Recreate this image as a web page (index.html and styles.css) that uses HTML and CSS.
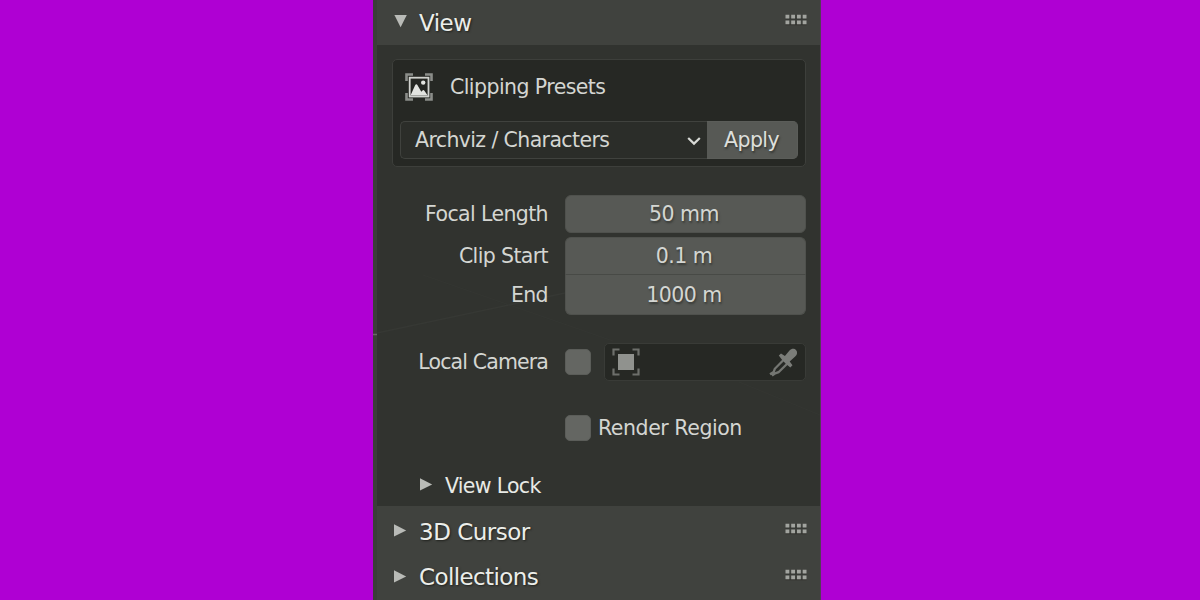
FILE: index.html
```html
<!DOCTYPE html>
<html lang="en">
<head>
<meta charset="utf-8">
<title>View panel</title>
<link rel="stylesheet" href="styles.css">
</head>
<body>
<svg class="defs" width="0" height="0" aria-hidden="true">
  <symbol id="grip" viewBox="0 0 22 12">
    <path class="grip-shadow" d="M.5 4.500h21v1H.5zM.5 10.200h21v1H.5z"/>
    <path class="grip-dots" d="M.5.7h3.8v3.8H.5zM6.2.7H10v3.8H6.2zM12 .7h3.8v3.8H12zM17.7.7h3.8v3.8h-3.8zM.5 6.4h3.8v3.8H.5zM6.2 6.4H10v3.8H6.2zM12 6.4h3.8v3.8H12zM17.7 6.4h3.8v3.8h-3.8z"/>
  </symbol>
  <symbol id="tri" viewBox="0 0 13 13"><path d="M0 .2V12.600L12.200 6.400z"/></symbol>
</svg>
<main class="sidebar">
  <svg class="lines" width="448" height="600" aria-hidden="true">
    <path d="M4 333L192 293" stroke="#363834" stroke-width="1.500"/>
    <path d="M50 275L240 341M366 382L447 415" stroke="#343632"/>
    <path d="M0 334.500H4" stroke="#686a66" stroke-width="1.500"/>
  </svg>
  <div class="edge"></div>
  <div class="panels">
    <header class="head head-view">
      <svg class="tri down"><use href="#tri"/></svg>
      <h1 class="title">View</h1>
      <svg class="grip"><use href="#grip"/></svg>
    </header>
    <section class="content">
      <div class="presets">
        <div class="presets-head">
          <svg class="preset-icon" width="28" height="28" viewBox="0 0 28 28">
            <path d="M1.500 8V1.500H8M20 1.500h6.500V8M26.500 20v6.500H20M8 26.500H1.500V20" fill="none" stroke="#8b8d89" stroke-width="2.600"/>
            <rect x="4.700" y="4.700" width="18.800" height="18.800" fill="#242622" stroke="#d0d2ce" stroke-width="1.800"/>
            <path d="M5.500 22.600L10 12.500q1.300-2.600 2.700 0l3.600 6.300 1.200-1.400q1-.8 1.900.4l3.300 4.800z" fill="#e2e4e0"/>
            <circle cx="18.200" cy="9.600" r="2.200" fill="#e2e4e0"/>
          </svg>
          <span class="t-clip">Clipping Presets</span>
        </div>
        <div class="presets-row">
          <div class="select">
            <span class="t-arch">Archviz / Characters</span>
            <svg class="chevron" width="14" height="10" viewBox="0 0 14 10"><path d="M1.200 2L7 7.600 12.800 2" fill="none" stroke="#d8dad6" stroke-width="2.200"/></svg>
          </div>
          <button class="apply">Apply</button>
        </div>
      </div>
      <div class="row focal"><label class="label">Focal Length</label><div class="num">50 mm</div></div>
      <div class="row clip-start"><label class="label">Clip Start</label><div class="num top">0.1 m</div></div>
      <div class="row clip-end"><label class="label">End</label><div class="num bottom">1000 m</div></div>
      <div class="row camera">
        <label class="label t-camera">Local Camera</label>
        <span class="check"></span>
        <div class="object">
          <svg width="28" height="28" viewBox="0 0 28 28">
            <path d="M1.500 7.500v-6h6M20.500 1.500h6v6M26.500 20.500v6h-6M7.500 26.500h-6v-6" fill="none" stroke="#6d6f6b" stroke-width="2.200"/>
            <rect x="6" y="6" width="16" height="16" fill="#90928e"/>
          </svg>
          <svg width="29" height="29" viewBox="0 0 29 29">
            <path d="M15.500 11L5.800 20.800 4.600 24.100 1 26.200M19.200 14.700L9.500 24.200 6.200 25.300 3 27.700" fill="none" stroke="#747672" stroke-width="2.300"/>
            <path d="M9.800 7.500l2.200-2.100 3.900 2.700 4.600-5.700c2-2.300 5-2.200 6.500-.5 1.700 1.800 1.500 4.600-.8 6.500l-5.500 5.100 2.800 3.700-2.200 2.200-4.800-3.900-3.500-3.700z" fill="#7b7d79"/>
          </svg>
        </div>
      </div>
      <div class="row region">
        <span class="label"></span><span class="check"></span><span class="t-region">Render Region</span>
      </div>
      <div class="sub"><svg class="tri"><use href="#tri"/></svg><span class="t-lock">View Lock</span></div>
    </section>
    <header class="head head-cursor">
      <svg class="tri"><use href="#tri"/></svg><h2 class="title t-cursor">3D Cursor</h2><svg class="grip"><use href="#grip"/></svg>
    </header>
    <header class="head head-coll">
      <svg class="tri"><use href="#tri"/></svg><h2 class="title t-coll">Collections</h2><svg class="grip"><use href="#grip"/></svg>
    </header>
  </div>
</main>
</body>
</html>
```
FILE: styles.css
```css
* { box-sizing: border-box; }
body {
  margin: 0;
  height: 600px;
  overflow: hidden;
  background: #af00d3;
  font: 20.5px/24px "DejaVu Sans", sans-serif;
  letter-spacing: -0.5px;
  color: #d4d6d2;
}
svg { display: block; flex: none; }
.defs { position: absolute; }
.sidebar {
  position: relative;
  display: flex;
  width: 448px;
  height: 600px;
  margin-left: 373px;
  background: #31332f;
  border-right: 1px solid #543c58;
}
.lines { position: absolute; left: 0; top: 0; fill: none; }
.edge { flex: none; width: 4px; background: #3b3d39; }
.panels { flex: 1; min-width: 0; position: relative; }
.head {
  display: flex;
  align-items: center;
  height: 44px;
  padding: 0 13px 0 17px;
  background: #40423e;
}
.head-view { height: 44.5px; padding-top: 1px; }
.head-cursor { height: 49px; padding-top: 1px; }
.tri { width: 13px; height: 13px; fill: #b9bbb7; }
.head .tri { margin-bottom: 2px; }
.down { transform: rotate(90deg); }
.title {
  flex: 1;
  margin: 0 0 0 12px;
  font-size: 23px;
  font-weight: 400;
  letter-spacing: -0.5px;
  color: #eceeea;
  text-shadow: 1px 1px 2px #20221e;
}
.t-cursor { padding-top: 1px; }
.t-coll { letter-spacing: -0.6px; }
.grip { width: 22px; height: 12px; margin-bottom: 5px; }
.grip-dots { fill: #a2a49f; }
.grip-shadow { fill: #30322e; }
.head-coll { height: 46px; margin-bottom: -3px; padding-bottom: 2px; }
.content { height: 461.5px; padding: 14.5px 0 0 15px; }
.presets {
  width: 414px;
  height: 108px;
  padding: 13px 7px 7px;
  background: #262824;
  border: 1px solid #3d3f3b;
  border-radius: 5px;
}
.presets-head { display: flex; align-items: center; height: 28px; padding-left: 5px; gap: 17px; }
.t-clip { margin-bottom: 1px; letter-spacing: -0.57px; }
.t-arch { letter-spacing: -0.62px; }
.t-camera.t-camera { letter-spacing: -0.87px; }
.presets-row { display: flex; height: 38px; margin-top: 20px; }
.select {
  display: flex;
  align-items: center;
  justify-content: space-between;
  width: 307px;
  padding: 0 6px 0 14px;
  background: #2b2d29;
  border: 1px solid #40423e;
  border-right: 0;
  border-radius: 5px 0 0 5px;
}
.chevron { margin-top: 2px; }
.apply {
  width: 91px;
  padding: 0 1px 0 0;
  border: 1px solid #5b5d59;
  border-left: 0;
  border-radius: 0 5px 5px 0;
  background: #575955;
  color: #dddfdb;
  font: inherit;
  letter-spacing: -0.6px;
  text-shadow: 1px 2px 2px #353733;
}
.row { display: flex; align-items: center; height: 38px; }
.label { width: 156px; margin-right: 17px; text-align: right; letter-spacing: -0.62px; }
.num {
  width: 241px;
  height: 100%;
  padding-right: 3px;
  line-height: 37px;
  text-align: center;
  background: #575955;
  border: 1px solid #4f514d;
  border-radius: 6px;
  text-shadow: 1px 2px 2px #393b37;
}
.focal { margin-top: 28px; }
.clip-start { margin-top: 4px; }
.top { border-radius: 6px 6px 0 0; border-bottom-color: #484a46; }
.clip-end { height: 40px; }
.bottom { border-radius: 0 0 6px 6px; border-top: 0; line-height: 40px; }
.camera { margin-top: 28px; }
.check { width: 26px; height: 26px; border-radius: 5px; background: #646662; border: 1px solid #5b5d59; }
.object {
  display: flex;
  align-items: center;
  justify-content: space-between;
  width: 202px;
  height: 38px;
  margin-left: 13px;
  padding: 0 7px;
  background: #262824;
  border: 1px solid #393b37;
  border-radius: 5px;
}
.region { margin-top: 28px; }
.t-region { margin-left: 7px; letter-spacing: -0.45px; }
.sub { display: flex; align-items: center; height: 30px; margin-top: 24px; padding-left: 28px; gap: 12px; color: #e8eae6; }
.sub .tri { margin-bottom: 3px; }
.t-lock { letter-spacing: -0.7px; }
```
